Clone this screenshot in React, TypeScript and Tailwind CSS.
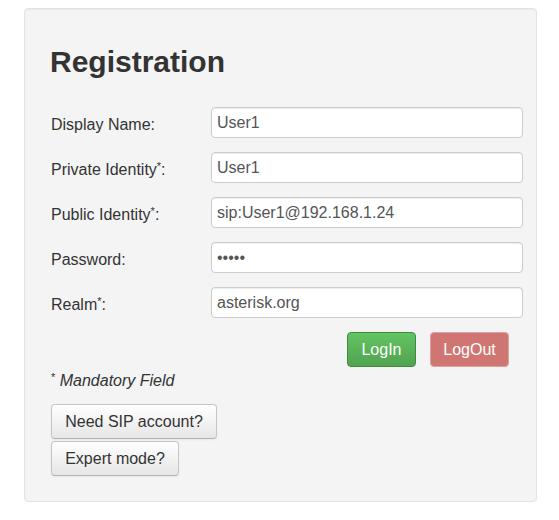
const fields = [
  { label: "Display Name", required: false, value: "User1", type: "text" },
  { label: "Private Identity", required: true, value: "User1", type: "text" },
  { label: "Public Identity", required: true, value: "sip:User1@192.168.1.24", type: "text" },
  { label: "Password", required: false, value: "mysecret", type: "password" },
  { label: "Realm", required: true, value: "asterisk.org", type: "text" },
];

export default function App() {
  return (
    <div className="min-h-[520px] bg-white pt-2 pl-6 font-['Liberation_Sans',Arial,sans-serif] text-[#333]">
      <div className="w-[513px] h-[494px] rounded border border-[#e3e3e3] bg-[#f4f4f4] pl-[25px] pr-[13px] pt-[35px] shadow-[inset_0_1px_1px_rgba(0,0,0,0.05)]">
        <h2 className="text-[30px] font-bold leading-[36px] text-[#333]">Registration</h2>

        <div className="mt-[27px] flex flex-col gap-[14px]">
          {fields.map((f) => (
            <div key={f.label} className="flex items-center">
              <label className="w-[161px] pl-px pt-[5px] text-[16px] leading-5">
                {f.label}
                {f.required && <sup className="text-[11px]">*</sup>}:
              </label>
              <input
                type={f.type}
                defaultValue={f.type === "password" ? "12345" : f.value}
                className="h-[31px] w-[312px] rounded border border-[#ccc] bg-white px-[5px] text-[16px] text-[#555] outline-none shadow-[inset_0_1px_1px_rgba(0,0,0,0.075)]"
              />
            </div>
          ))}
        </div>

        <div className="mt-[14px] flex justify-end gap-[14px] pr-[14px]">
          <button className="h-[35px] w-[69px] rounded border border-[#3e8b3e] bg-gradient-to-b from-[#62c462] to-[#51a351] text-[16px] text-white">
            LogIn
          </button>
          <button className="h-[35px] w-[79px] rounded border border-[#d9a3a1] bg-[#cf7673] text-[16px] text-white">
            LogOut
          </button>
        </div>

        <p className="mt-[4px] pl-px text-[16px] leading-5">
          <sup className="text-[11px]">*</sup> <i>Mandatory Field</i>
        </p>

        <div className="mt-[13px] flex flex-col items-start gap-[2px] pl-px">
          <button className="h-[35px] w-[166px] rounded border border-[#c5c5c5] border-b-[#b3b3b3] bg-gradient-to-b from-white to-[#e6e6e6] text-[16px] text-[#333] shadow-[0_1px_2px_rgba(0,0,0,0.05)]">
            Need SIP account?
          </button>
          <button className="h-[35px] w-[128px] rounded border border-[#c5c5c5] border-b-[#b3b3b3] bg-gradient-to-b from-white to-[#e6e6e6] text-[16px] text-[#333] shadow-[0_1px_2px_rgba(0,0,0,0.05)]">
            Expert mode?
          </button>
        </div>
      </div>
    </div>
  );
}
